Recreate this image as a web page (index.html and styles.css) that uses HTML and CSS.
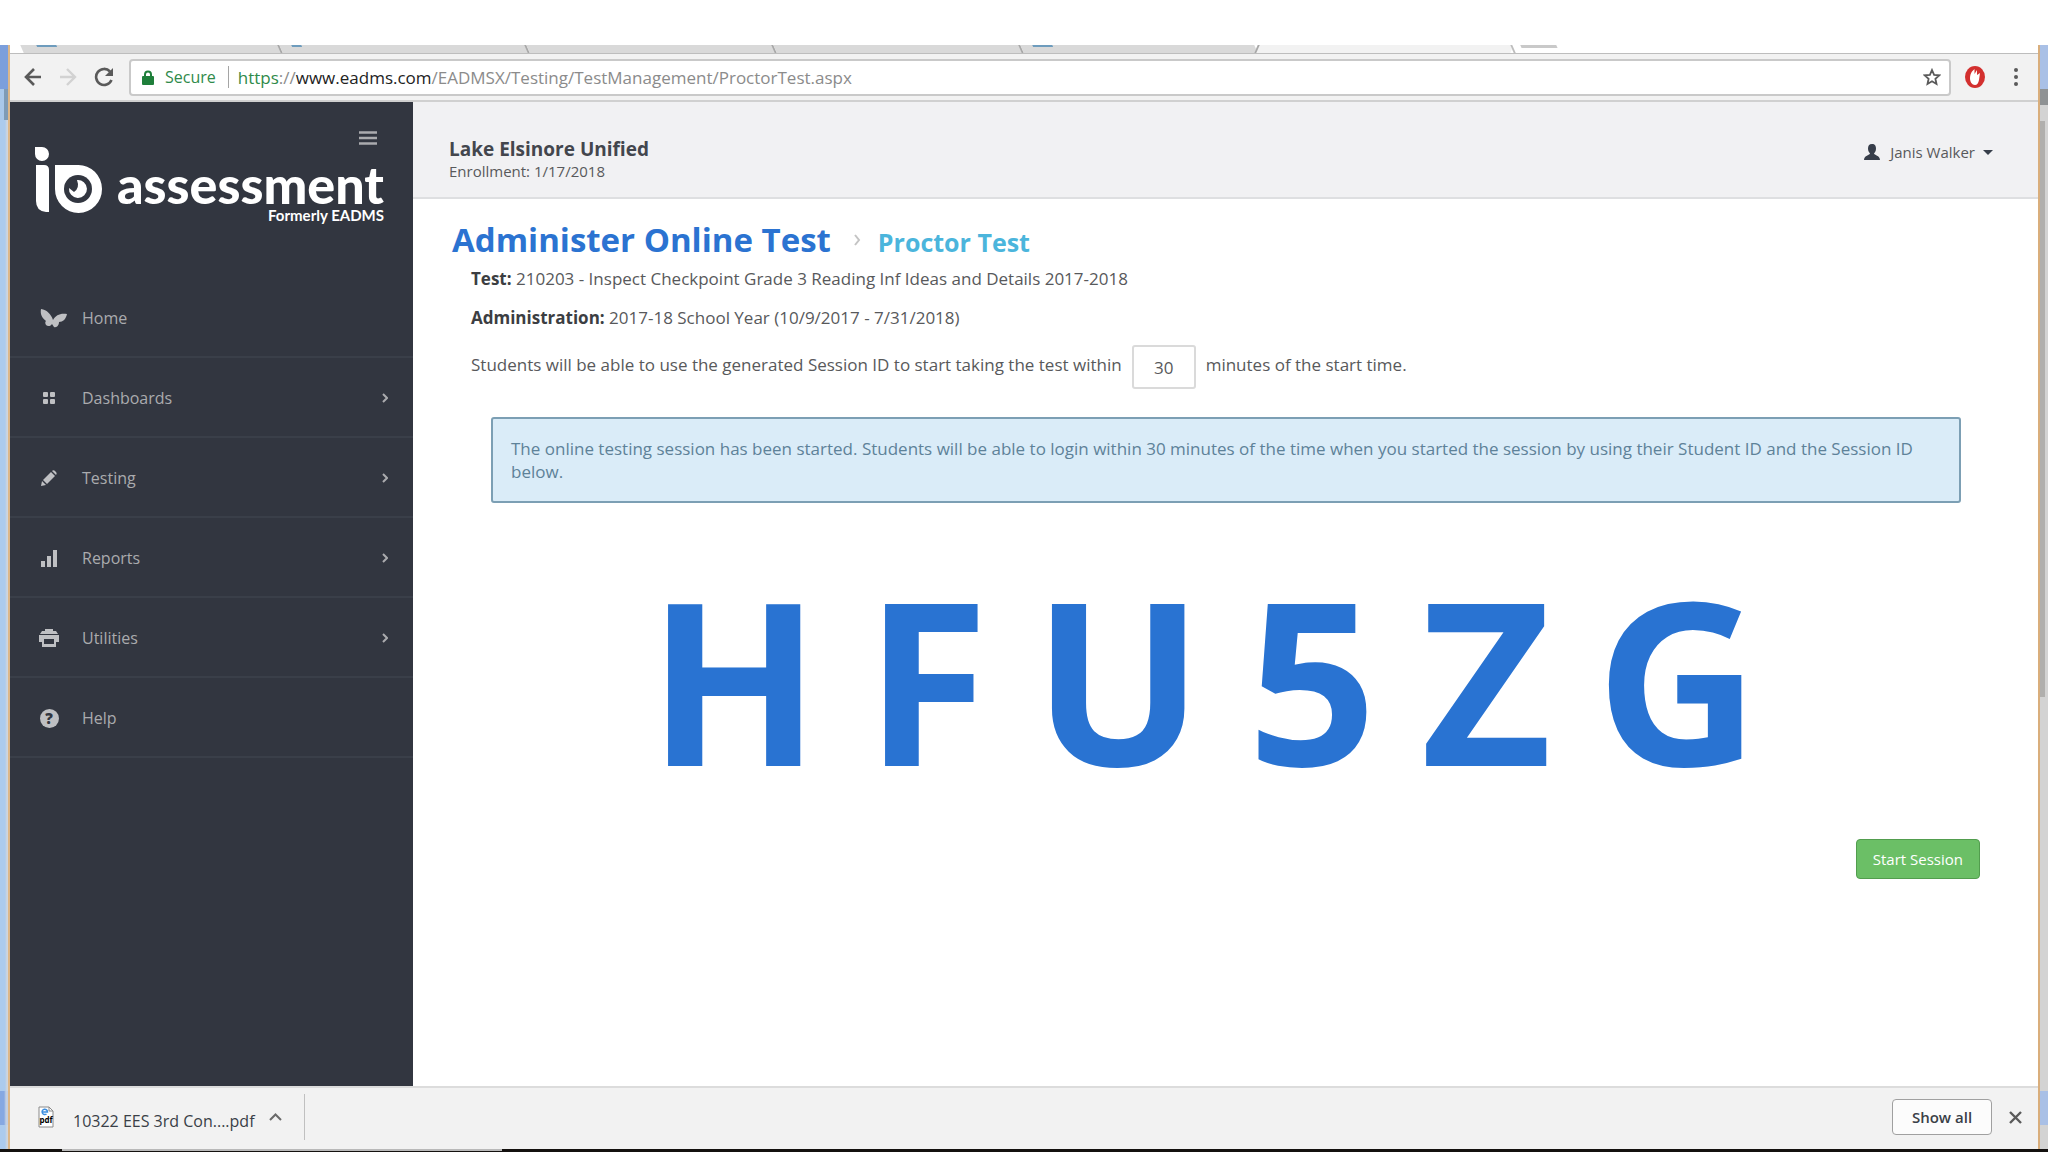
FILE: index.html
```html
<!DOCTYPE html>
<html lang="en">
  <head>
    <meta charset="UTF-8">
    <title>Administer Online Test - Proctor Test</title>
    <link rel="stylesheet" href="styles.css">
  </head>
  <body>
    <div class="desktop">
      <div class="edge edge-left"><i class="edge-tab"></i><i class="edge-cell"></i><i class="edge-foot"></i></div>
      <div class="window">
        <!-- Tab strip -->
        <div class="tabs">
          <div class="tab first"><i class="favicon"></i></div>
          <div class="tab"><i class="favicon small"></i></div>
          <div class="tab"></div>
          <div class="tab"></div>
          <div class="tab last"><i class="favicon"></i></div>
          <div class="tab active"></div>
          <div class="tab-rest"><i class="new-tab"></i></div>
        </div>
        <!-- Address bar -->
        <div class="toolbar">
          <button class="nav-btn" aria-label="Back"><svg width="18" height="20" viewBox="0 0 18 20"><path d="M17 10H2M10 2L2 10l8 8" fill="none" stroke="#5a5a5a" stroke-width="2.6"/></svg></button>
          <button class="nav-btn" aria-label="Forward"><svg width="18" height="20" viewBox="0 0 18 20"><path d="M1 10h15M8 2l8 8-8 8" fill="none" stroke="#d2d2d2" stroke-width="2.4"/></svg></button>
          <button class="nav-btn" aria-label="Reload"><svg width="20" height="20" viewBox="0 0 20 20"><path d="M16 4.500A8 8 0 1 0 17.500 13" fill="none" stroke="#5a5a5a" stroke-width="2.600"/><path d="M19 1v8h-8z" fill="#5a5a5a"/></svg></button>
          <div class="address">
            <svg width="12" height="15" viewBox="0 0 12 15"><path d="M3 7V4.500a3 3 0 0 1 6 0V7" fill="none" stroke="#1f7f3b" stroke-width="2"/><rect y="6" width="12" height="9" rx="1" fill="#1f7f3b"/></svg>
            <span class="secure">Secure</span>
            <span class="url"><span class="scheme">https</span>://<span class="host">www.eadms.com</span>/EADMSX/Testing/TestManagement/ProctorTest.aspx</span>
            <button class="star" aria-label="Bookmark"><svg width="18" height="18" viewBox="0 0 18 18"><path d="M9 2l2.100 4.800 5.200.5-3.900 3.500 1.100 5.200L9 13.300 4.500 16l1.100-5.200L1.700 7.300l5.200-.5z" fill="none" stroke="#5a5a5a" stroke-width="1.800"/></svg></button>
          </div>
          <svg class="ext" width="20" height="22" viewBox="0 0 20 22"><ellipse cx="10" cy="11" rx="10" ry="11" fill="#d3302f"/><path d="M7 5.500L9.500 3v5L12 4v5l3-2-1 7c-.5 3-2 5-4 5-3 0-5-3-5-7 0-3 1-5 2-6.500z" fill="#fff"/></svg>
          <button class="more" aria-label="Menu"><svg width="4" height="18" viewBox="0 0 4 18"><g fill="#5a5a5a"><circle cx="2" cy="2" r="2"/><circle cx="2" cy="9" r="2"/><circle cx="2" cy="16" r="2"/></g></svg></button>
        </div>

        <div class="page">
          <!-- Sidebar -->
          <div class="sidebar">
            <button class="toggle" aria-label="Toggle menu"><svg width="18" height="14" viewBox="0 0 18 14"><path d="M0 1.500h18M0 7h18M0 12.500h18" stroke="#aaabae" stroke-width="2.600"/></svg></button>
            <div class="logo">
              <svg width="68" height="66" viewBox="0 0 68 66">
                <path d="M0 0h7a7 7 0 1 1-7 7zM1 18h8q5 0 5 5v42h-3Q1 64 1 54z" fill="#fff"/>
                <path d="M20 18h23a23.500 24 0 1 1-23 24z" fill="#fff"/>
                <circle cx="43" cy="42" r="14" fill="#323640"/>
                <path d="M42 33a9 9 0 1 1-8 8l5 4q6-4 3-12z" fill="#fff"/>
              </svg>
              <div class="wordmark">
                <div class="brand">assessment</div>
                <div class="former">Formerly EADMS</div>
              </div>
            </div>
            <ul class="menu">
              <li><a href="#"><span class="icon wide"><svg width="27" height="19" viewBox="0 0 27 19"><path d="M1 0c6 1 10 5 12 11 3-5 7-7 14-6-1 5-4 8-8 8 0 3-2 6-5 5l-2-3c-1 2-4 3-6 1-1-2-1-3 0-4C2 9 0 5 1 0z" fill="#bfc0c3"/></svg></span>Home</a></li>
              <li><a href="#"><span class="icon"><svg width="12" height="12" viewBox="0 0 12 12"><g fill="#bfc0c3"><rect width="5" height="5" rx="1"/><rect x="7" width="5" height="5" rx="1"/><rect y="7" width="5" height="5" rx="1"/><rect x="7" y="7" width="5" height="5" rx="1"/></g></svg></span>Dashboards<svg class="arrow" width="6" height="10" viewBox="0 0 6 10"><path d="M1 1l4 4-4 4"/></svg></a></li>
              <li><a href="#"><span class="icon"><svg width="16" height="16" viewBox="0 0 16 16"><path d="M0 16l1-5 4 4zM2 10l8-8 4 4-8 8zM11 1q1.500-1.500 3.500.5T15 5z" fill="#bfc0c3"/></svg></span>Testing<svg class="arrow" width="6" height="10" viewBox="0 0 6 10"><path d="M1 1l4 4-4 4"/></svg></a></li>
              <li><a href="#"><span class="icon"><svg width="16" height="17" viewBox="0 0 16 17"><path d="M0 11h4v6H0zM6 6h4v11H6zM12 0h4v17h-4z" fill="#bfc0c3"/></svg></span>Reports<svg class="arrow" width="6" height="10" viewBox="0 0 6 10"><path d="M1 1l4 4-4 4"/></svg></a></li>
              <li><a href="#"><span class="icon"><svg width="20" height="18" viewBox="0 0 20 18"><path d="M6 0h8v2h3l2 3H1l2-3h3zM0 6h20v7h-3v5H3v-5H0zM5 10v5h10v-5z" fill="#bfc0c3" fill-rule="evenodd"/></svg></span>Utilities<svg class="arrow" width="6" height="10" viewBox="0 0 6 10"><path d="M1 1l4 4-4 4"/></svg></a></li>
              <li><a href="#"><span class="icon"><span class="help">?</span></span>Help</a></li>
            </ul>
          </div>

          <!-- Main content -->
          <div class="main">
            <div class="header">
              <div>
                <div class="district">Lake Elsinore Unified</div>
                <div class="enrollment">Enrollment: 1/17/2018</div>
              </div>
              <a class="user" href="#"><svg width="16" height="16" viewBox="0 0 16 16"><path d="M8 0c3 0 4 2 4 4.500S11 8 10 9.500c0 1.500 6 2 6 6.500H0c0-4.500 6-5 6-6.500C5 8 4 7 4 4.500S5 0 8 0z" fill="#373e4a"/></svg><span>Janis Walker</span><i class="caret"></i></a>
            </div>
            <div class="crumbs">
              <h1>Administer Online Test</h1>
              <svg width="7" height="12" viewBox="0 0 7 12"><path d="M1 1l4 5-4 5" fill="none" stroke="#c4c4c4" stroke-width="2"/></svg>
              <h2>Proctor Test</h2>
            </div>
            <div class="content">
              <p><b>Test:</b> 210203 - Inspect Checkpoint Grade 3 Reading Inf Ideas and Details 2017-2018</p>
              <p><b>Administration:</b> 2017-18 School Year (10/9/2017 - 7/31/2018)</p>
              <div class="window-row">
                <label for="minutes">Students will be able to use the generated Session ID to start taking the test within</label>
                <input id="minutes" type="text" value="30">
                <label for="minutes">minutes of the start time.</label>
              </div>
              <div class="alert">The online testing session has been started. Students will be able to login within 30 minutes of the time when you started the session by using their Student ID and the Session ID below.</div>
              <div class="session-id"><span>H</span><span>F</span><span>U</span><span>5</span><span>Z</span><span>G</span></div>
              <div class="actions"><button class="start">Start Session</button></div>
            </div>
          </div>
        </div>

        <!-- Downloads -->
        <div class="downloads">
          <div class="file">
            <svg width="16" height="22" viewBox="0 0 16 22"><path d="M1 1h10l4 4v16H1z" fill="#fff" stroke="#8a8a8a"/><path d="M11 1v4h4" fill="none" stroke="#8a8a8a"/><path d="M4 6h5.500a2.700 2.700 0 1 0-1 2" fill="none" stroke="#3c8ee0" stroke-width="1.500"/><text x="8" y="17" text-anchor="middle" class="pdf">pdf</text></svg>
            <span class="filename">10322 EES 3rd Con....pdf</span>
            <svg width="13" height="8" viewBox="0 0 13 8"><path d="M1 7l5.500-5.500L12 7" fill="none" stroke="#6a6a6a" stroke-width="2"/></svg>
          </div>
          <button class="show-all">Show all</button>
          <button class="close" aria-label="Close"><svg width="13" height="13" viewBox="0 0 13 13"><path d="M1 1l11 11M12 1L1 12" stroke="#5a5a5a" stroke-width="2.400"/></svg></button>
        </div>
      </div>
      <div class="edge edge-right"><i class="edge-box"></i><i class="edge-thumb"></i><i class="edge-end"></i></div>
    </div>
    <div class="taskbar"><i></i></div>
  </body>
</html>
```
FILE: styles.css
```css
* {
  box-sizing: border-box;
}
body {
  font-family: "Open Sans", "Noto Sans", sans-serif;
  font-size: 17px;
  color: #58595b;
  margin: 0;
  padding-top: 45px;
  min-height: 100vh;
  background-color: #fff;
  display: flex;
  flex-direction: column;
}
button {
  font-family: inherit;
  border: 0;
  padding: 0;
  background: none;
}
svg {
  display: block;
  flex: none;
}
a {
  color: inherit;
  text-decoration: none;
}
.desktop {
  flex: 1;
  display: flex;
}
/* what shows of the desktop on both sides of the window */
.edge {
  flex: none;
  width: 10px;
  display: flex;
  flex-direction: column;
}
.edge-left {
  background: linear-gradient(90deg, #accbee 5px, #cfd5de 7px);
  border-right: 2px solid #dcb78a;
}
.edge-tab {
  height: 44px;
  background: #7c9fdc;
}
.edge-cell {
  height: 31px;
  background: linear-gradient(90deg, #a9c8ea 4px, #7f9bb5 4px);
}
.edge-foot {
  height: 34px;
  margin-top: auto;
  margin-bottom: 24px;
  background: linear-gradient(90deg, #86a8e2 4px, #c3cfe2 6px);
}
.edge-right {
  background: #d3d3d3;
  border-left: 2px solid #d9ae7c;
}
.edge-box {
  height: 60px;
  border-bottom: 16px solid #8f9294;
  background: #a9c0e6;
}
.edge-thumb {
  height: 576px;
  width: 5px;
  margin-top: 16px;
  background: #b0afad;
}
.edge-end {
  height: 34px;
  margin-top: auto;
  margin-bottom: 24px;
  background: #a9c0e6;
}
.window {
  flex: 1;
  min-width: 0;
  display: flex;
  flex-direction: column;
}
.tabs {
  display: flex;
  height: 9px;
  overflow: hidden;
  border-bottom: 1px solid #bdbdbd;
  background: #fff;
}
.tab {
  width: 247px;
  padding-left: 12px;
  background: #d9d9d9;
  border-right: 2px solid #a8a8a8;
  transform: skewX(24deg);
}
.tab.first {
  width: 259px;
  margin-left: 12px;
  padding-left: 16px;
}
.tab.last {
  width: 234px;
  border-right: 0;
}
.tab.active {
  width: 256px;
  background: #f2f2f2;
  border-left: 2px solid #a8a8a8;
  border-right: 0;
  transform: skewX(-24deg);
}
.favicon {
  display: block;
  width: 20px;
  height: 2px;
  background: #6e9cbd;
}
.favicon.small {
  width: 10px;
}
.tab-rest {
  flex: 1;
  padding-left: 8px;
  background: #fff;
  border-left: 2px solid #bdbdbd;
  transform: skewX(24deg);
}
.new-tab {
  display: block;
  width: 36px;
  height: 3px;
  background: #c9c9c9;
}
.toolbar {
  display: flex;
  align-items: center;
  height: 48px;
  padding: 0 20px 0 14px;
  background: #f2f2f2;
  border-bottom: 2px solid #d0d0d0;
}
.nav-btn {
  width: 20px;
  margin-right: 15px;
}
.address {
  flex: 1;
  display: flex;
  align-items: center;
  height: 37px;
  margin-right: 14px;
  padding: 0 8px 0 11px;
  background: #fff;
  border: 2px solid #c9c9c9;
  border-radius: 4px;
}
.secure {
  font-size: 16px;
  line-height: 22px;
  color: #2f8a4a;
  margin-left: 11px;
  padding-right: 12px;
  border-right: 1px solid #a5a5a5;
}
.url {
  flex: 1;
  padding-left: 9px;
  color: #8b8b8b;
}
.scheme {
  color: #2f8a4a;
}
.host {
  color: #222;
}
.more {
  margin-left: 29px;
}
.page {
  flex: 1;
  display: flex;
}
.sidebar {
  flex: none;
  width: 403px;
  padding-top: 29px;
  color: #aaabae;
  background: #323640;
}
.toggle {
  display: block;
  margin-left: auto;
  margin-right: 36px;
}
.logo {
  display: flex;
  justify-content: space-between;
  margin: 2px 29px 54px 25px;
  color: #fff;
  font-family: Lato, sans-serif;
  text-align: right;
}
.wordmark {
  padding-top: 15px;
}
.brand {
  font-size: 52px;
  font-weight: 900;
  line-height: 44px;
}
.former {
  font-size: 15px;
  font-weight: 700;
  line-height: 18px;
}
.menu {
  list-style: none;
  margin: 0;
  padding: 0;
}
.menu a {
  display: flex;
  align-items: center;
  height: 80px;
  padding: 2px 25px 0 29px;
  font-size: 16px;
  border-bottom: 2px solid #3a3f49;
}
.icon {
  display: flex;
  justify-content: center;
  width: 20px;
  margin-right: 23px;
}
.icon.wide {
  width: 27px;
  margin-left: 1px;
  margin-right: 15px;
}
.help {
  width: 19px;
  height: 19px;
  border-radius: 50%;
  background: #bfc0c3;
  color: #323640;
  font-size: 15px;
  font-weight: 800;
  line-height: 19px;
  text-align: center;
}
.arrow {
  margin-left: auto;
  fill: none;
  stroke: #aaabae;
  stroke-width: 2;
}
.main {
  flex: 1;
  min-width: 0;
}
.header {
  display: flex;
  justify-content: space-between;
  align-items: flex-start;
  height: 97px;
  padding: 36px 45px 0 36px;
  background: #f1f1f3;
  border-bottom: 2px solid #dedfe1;
  line-height: 22px;
}
.district {
  font-size: 19px;
  font-weight: 700;
  color: #43464d;
}
.enrollment {
  font-size: 15px;
}
.user {
  display: flex;
  align-items: center;
  gap: 10px;
  padding-top: 3px;
  font-size: 15px;
}
.caret {
  border: 5px solid transparent;
  border-top-color: #373e4a;
  border-bottom: 0;
  margin-left: -2px;
}
.crumbs {
  display: flex;
  align-items: baseline;
  padding: 18px 39px 4px;
}
.crumbs svg {
  align-self: center;
}
h1, h2 {
  margin: 0;
  font-weight: 700;
}
h1 {
  font-size: 33px;
  line-height: 46px;
  color: #2b73d1;
  margin-right: 23px;
}
h2 {
  font-size: 25px;
  line-height: 40px;
  color: #4bb5dc;
  margin-left: 17px;
}
.content {
  padding: 0 58px 40px;
}
p {
  margin: 0 0 15px;
  line-height: 24px;
}
b {
  color: #3c3e42;
}
.window-row {
  display: flex;
  align-items: center;
  gap: 10px;
}
label {
  padding-bottom: 5px;
}
input {
  width: 64px;
  height: 44px;
  border: 2px solid #dadada;
  border-radius: 3px;
  font-family: inherit;
  font-size: 17px;
  color: #58595b;
  text-align: center;
}
.alert {
  margin: 28px 19px 0 20px;
  padding: 18px;
  line-height: 23px;
  color: #5e8299;
  background: #daecf8;
  border: 2px solid #7c9fb4;
  border-radius: 3px;
}
.session-id {
  display: flex;
  justify-content: center;
  gap: 44px;
  margin-top: 75px;
  padding-right: 44px;
  font-size: 226px;
  font-weight: 700;
  line-height: 200px;
  color: #2973d2;
}
.actions {
  margin-top: 61px;
  text-align: right;
}
.start {
  height: 40px;
  padding: 0 16px;
  font-size: 15px;
  color: #fff;
  background: #6bbf66;
  border: 1px solid #529d4e;
  border-radius: 4px;
}
.downloads {
  display: flex;
  align-items: center;
  height: 63px;
  padding: 0 16px 3px 0;
  background: #f2f2f2;
  border-top: 2px solid #dcdcdc;
}
.file {
  display: flex;
  align-items: center;
  height: 46px;
  margin-right: auto;
  padding: 0 22px 0 28px;
  border-right: 1px solid #c0c0c0;
}
.filename {
  margin: 0 14px 0 19px;
  padding-top: 8px;
  font-size: 16px;
  color: #3a3f47;
}
.pdf {
  font-size: 8px;
  font-weight: 700;
}
.show-all {
  width: 100px;
  height: 36px;
  font-size: 15px;
  font-weight: 600;
  color: #3a4047;
  background: #fcfcfc;
  border: 1px solid #a0a0a0;
  border-radius: 4px;
}
.close {
  margin-left: 17px;
}
.taskbar {
  height: 3px;
  padding-left: 62px;
  background: #14110f;
}
.taskbar i {
  display: block;
  width: 440px;
  height: 2px;
  background: #b9b9b9;
}
```
